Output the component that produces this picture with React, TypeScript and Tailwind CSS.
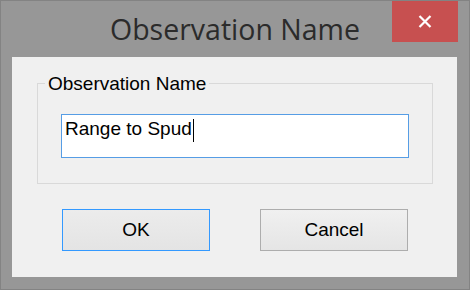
import React from "react";

export default function App() {
  return (
    <div className="w-[470px] h-[290px] border border-[#838383] bg-[#979797] flex flex-col">
      <div className="h-[56px] grid grid-cols-[1fr_auto_1fr]">
        <div />
        <div
          className="pt-[8px] text-[28.5px] leading-[40px] text-[#2b2b2b] whitespace-nowrap"
          style={{ fontFamily: '"Open Sans", "Noto Sans", sans-serif' }}
        >
          Observation Name
        </div>
        <div className="flex justify-end items-start">
          <div className="mr-[11px] w-[66px] h-[41px] bg-[#c75050] flex items-center justify-center">
            <svg width="14" height="13" viewBox="0 0 14 13">
              <path d="M1.5 1 L12.5 12 M12.5 1 L1.5 12" stroke="#ffffff" strokeWidth="2.2" />
            </svg>
          </div>
        </div>
      </div>
      <div
        className="ml-[11px] w-[445px] h-[220px] bg-[#f0f0f0] pt-[26px] pl-[25px] text-[19px] text-black"
        style={{ fontFamily: '"Liberation Sans", Arial, sans-serif' }}
      >
        <div className="relative w-[396px] h-[101px] border border-[#d9d9d9] pl-[23px] pt-[30px]">
          <div className="absolute left-[7px] top-[-11px] px-[3px] bg-[#f0f0f0] leading-[22px] whitespace-nowrap">
            Observation Name
          </div>
          <div className="w-[348px] h-[44px] border border-[#569de5] bg-white pl-[3px] pt-[3px] leading-[22px] flex items-start">
            <span className="whitespace-pre">Range to Spud</span>
            <span className="inline-block w-px h-[23px] bg-black ml-px mt-[1px]" />
          </div>
        </div>
        <div className="flex gap-[50px] pl-[25px] mt-[25px]">
          <div className="w-[148px] h-[42px] border border-[#3399ff] bg-gradient-to-b from-[#ececec] to-[#e4e4e4] flex items-center justify-center leading-[22px]">
            OK
          </div>
          <div className="w-[148px] h-[42px] border border-[#adadad] bg-gradient-to-b from-[#f0f0f0] to-[#e5e5e5] flex items-center justify-center leading-[22px]">
            Cancel
          </div>
        </div>
      </div>
    </div>
  );
}
